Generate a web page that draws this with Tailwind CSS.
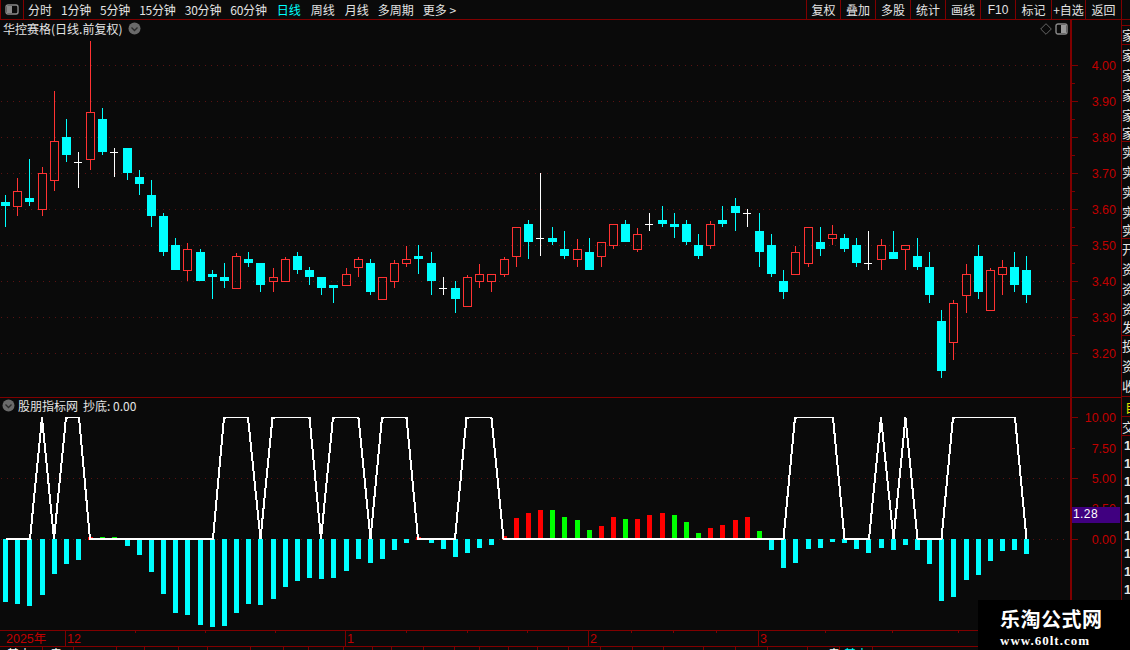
<!DOCTYPE html>
<html lang="zh">
<head>
<meta charset="utf-8">
<title>K线</title>
<script src="https://cdn.jsdelivr.net/npm/@tailwindcss/browser@4"></script>
</head>
<body class="bg-[#0a0a0a]">
<div class="relative w-[1130px] h-[650px] overflow-hidden bg-[#0a0a0a] text-[#e4e4e4] text-[12px] leading-[12px] font-['Noto_Sans_CJK_SC','Liberation_Sans',sans-serif]">

  <!-- top bar -->
  <header class="flex h-[20px] border-b border-[#800000] items-stretch">
    <div class="w-[24px] border-x border-[#800000] flex items-center justify-center">
      <svg width="14" height="11" viewBox="0 0 14 11"><rect x="1" y="1" width="12" height="9" rx="2" fill="none" stroke="#8a8a8a" stroke-width="1.4"/><rect x="2" y="2" width="5" height="7" fill="#8a8a8a"/></svg>
    </div>
    <nav class="flex items-center pl-[4px] gap-[9px]">
      <span>分时</span><span class="tracking-[-0.2px]">1分钟</span><span class="tracking-[-0.2px]">5分钟</span><span class="tracking-[-0.2px]">15分钟</span><span class="tracking-[-0.2px]">30分钟</span><span class="tracking-[-0.2px]">60分钟</span><span class="text-[#00ffff] ml-[1px]">日线</span><span class="ml-[1px]">周线</span><span class="ml-[1px]">月线</span><span>多周期</span><span>更多 &gt;</span>
    </nav>
    <div class="flex-1"></div>
    <div class="flex">
      <span class="w-[34px] border-l border-[#800000] flex items-center justify-center">复权</span>
      <span class="w-[35px] border-l border-[#800000] flex items-center justify-center">叠加</span>
      <span class="w-[35px] border-l border-[#800000] flex items-center justify-center">多股</span>
      <span class="w-[35px] border-l border-[#800000] flex items-center justify-center">统计</span>
      <span class="w-[35px] border-l border-[#800000] flex items-center justify-center">画线</span>
      <span class="w-[35px] border-l border-[#800000] flex items-center justify-center font-['Liberation_Sans',sans-serif]">F10</span>
      <span class="w-[36px] border-l border-[#800000] flex items-center justify-center">标记</span>
      <span class="w-[34px] border-l border-[#800000] flex items-center justify-center whitespace-nowrap">+自选</span>
      <span class="w-[37px] border-x border-[#800000] flex items-center justify-center">返回</span>
      <span class="w-[8px]"></span>
    </div>
  </header>

  <div class="flex h-[630px]">
    <div class="w-[1121px] flex flex-col">
      <!-- price pane -->
      <section class="flex h-[378px] border-b border-[#800000]">
        <div class="relative w-[1070px]">
          <svg id="price" class="block" width="1070" height="377" viewBox="0 20 1070 377" shape-rendering="crispEdges"></svg>
          <div class="absolute left-[3px] top-[2px] flex items-center gap-[6px] whitespace-nowrap">
            <span>华控赛格(日线.前复权)</span>
            <svg width="13" height="13" viewBox="0 0 13 13"><circle cx="6.5" cy="6.5" r="6" fill="#6a6a6a"/><path d="M3.5 5.5 L6.5 8.5 L9.5 5.5" fill="none" stroke="#2a2a2a" stroke-width="1.3"/></svg>
          </div>
          <div class="absolute right-[2px] top-[3px] flex items-center gap-[3px]">
            <svg width="12" height="12" viewBox="0 0 12 12"><path d="M6 .7 L11.3 6 L6 11.3 L.7 6 Z" fill="none" stroke="#666" stroke-width="1"/></svg>
            <svg width="13" height="12" viewBox="0 0 13 12"><rect x="1" y="1" width="11" height="10" rx="2" fill="none" stroke="#8a8a8a" stroke-width="1.4"/><rect x="6" y="2" width="5" height="8" fill="#9a9a9a"/></svg>
          </div>
        </div>
        <div class="w-[51px] border-l-2 border-[#800000]">
          <svg id="priceAxis" class="block" width="49" height="377" viewBox="1072 20 49 377"></svg>
        </div>
      </section>

      <!-- indicator pane -->
      <section class="flex h-[233px] border-b border-[#800000]">
        <div class="relative w-[1070px]">
          <svg id="ind" class="block" width="1070" height="232" viewBox="0 398 1070 232"></svg>
          <div class="absolute left-[2px] top-[1px] flex items-center gap-[3px] whitespace-nowrap">
            <svg width="13" height="13" viewBox="0 0 13 13"><circle cx="6.5" cy="6.5" r="6" fill="#6a6a6a"/><path d="M3.5 5.5 L6.5 8.5 L9.5 5.5" fill="none" stroke="#2a2a2a" stroke-width="1.3"/></svg>
            <span>股朋指标网</span><span class="ml-[2px]">抄底: 0.00</span>
          </div>
        </div>
        <div class="relative w-[51px] border-l-2 border-[#800000]">
          <svg id="indAxis" class="block" width="49" height="232" viewBox="1072 398 49 232"></svg>
          <div class="absolute left-0 top-[109px] w-[48px] h-[16px] bg-[#400080] pl-[1px] text-white font-['Liberation_Sans',sans-serif] leading-[15px] tracking-[0.4px]">1.28</div>
        </div>
      </section>

      <!-- date axis -->
      <section class="h-[16px] border-b border-[#800000]">
        <svg id="time" class="block" width="1121" height="15" viewBox="0 631 1121 15"></svg>
      </section>
      <section class="h-[3px] overflow-hidden">
        <svg id="tabs" class="block" width="1121" height="3" viewBox="0 647 1121 3"></svg>
      </section>
    </div>

    <!-- clipped side list -->
    <aside class="w-[9px] border-l border-[#800000] overflow-hidden flex flex-col whitespace-nowrap text-[13px]">
      <div class="h-[5px] bg-[#0a0a0a]"></div>
      <div class="h-[20px] border-y border-[#800000] leading-[18px]">家</div>
      <div class="h-[97px] border-b border-[#800000]">
        <div class="h-[20px] leading-[20px]">家</div><div class="h-[20px] leading-[20px]">家</div><div class="h-[20px] leading-[20px]">家</div><div class="h-[20px] leading-[20px]">家</div><div class="h-[16px] leading-[16px]">家</div>
      </div>
      <div class="h-[97px] border-b border-[#800000]">
        <div class="h-[20px] leading-[20px]">实</div><div class="h-[20px] leading-[20px]">实</div><div class="h-[20px] leading-[20px]">实</div><div class="h-[20px] leading-[20px]">实</div><div class="h-[16px] leading-[16px]">实</div>
      </div>
      <div class="h-[97px] border-b border-[#800000]">
        <div class="h-[20px] leading-[20px]">开</div><div class="h-[20px] leading-[20px]">资</div><div class="h-[20px] leading-[20px]">资</div><div class="h-[20px] leading-[20px]">资</div><div class="h-[16px] leading-[16px]">发</div>
      </div>
      <div class="h-[61px] border-b border-[#800000]">
        <div class="h-[20px] leading-[20px]">投</div><div class="h-[20px] leading-[20px]">资</div><div class="h-[20px] leading-[20px]">收</div>
      </div>
      <div class="h-[20px] border-b border-[#800000] leading-[20px] text-[#e0e000] pl-[3px]">自</div>
      <div class="h-[19px] border-b border-[#800000] leading-[19px]">交</div>
      <div class="font-['Liberation_Sans',sans-serif] font-bold text-[13px] pl-[2px] pt-[1px]">
        <div class="h-[18px] leading-[18px]">1</div><div class="h-[18px] leading-[18px]">1</div><div class="h-[18px] leading-[18px]">1</div><div class="h-[18px] leading-[18px]">1</div><div class="h-[18px] leading-[18px]">1</div><div class="h-[18px] leading-[18px]">1</div><div class="h-[18px] leading-[18px]">1</div><div class="h-[18px] leading-[18px]">1</div><div class="h-[18px] leading-[18px]">1</div>
      </div>
    </aside>
  </div>

  <!-- watermark -->
  <div class="absolute left-[978px] top-[600px] w-[152px] h-[50px] bg-black text-white flex flex-col items-start pl-[22px]">
    <div class="text-[20px] leading-[24px] mt-[7px] font-bold tracking-[0.5px] whitespace-nowrap">乐淘公式网</div>
    <div class="text-[13px] leading-[15px] mt-[2px] font-bold font-['Liberation_Serif',serif] tracking-[1px] whitespace-nowrap">www.60lt.com</div>
  </div>
</div>

<script>
const C='#00ffff',R='#ff3232',W='#ffffff',G='#00ff00',RB='#ff0000';
const LINE='#800000',TXT='#c00000',DOT='#5a1212',BG='#0a0a0a';
const rect=(x,y,w,h,f)=>`<rect x="${x}" y="${y}" width="${w}" height="${h}" fill="${f}"/>`;
const dots=(y,x2)=>`<line x1="1" x2="${x2}" y1="${y}" y2="${y}" stroke="${DOT}" stroke-width="1" stroke-dasharray="1 5" shape-rendering="crispEdges"/>`;

/* col, type, high, top, bottom, low */
const K=[[5,'c',195,202,206,227],[17,'r',178,191,207,216],[29,'c',159,198,202,206],[42,'r',167,173,210,216],[54,'r',91,141,181,191],[66,'c',119,137,155,162],[78,'w',152,162,162,188],[90,'r',41,112,160,170],[102,'c',108,119,152,155],[114,'w',148,152,152,177],[127,'c',148,148,173,180],[139,'c',170,177,184,195],[151,'c',180,195,216,227],[163,'c',213,216,252,256],[175,'c',238,245,270,270],[187,'r',243,249,271,281],[200,'c',249,252,281,281],[212,'c',270,274,277,299],[224,'c',263,277,281,288],[236,'r',253,256,289,289],[248,'c',252,259,263,267],[260,'c',263,263,285,292],[273,'r',268,277,282,292],[285,'r',257,259,282,282],[297,'c',252,256,270,274],[309,'c',267,270,277,285],[321,'c',277,277,288,295],[333,'c',285,285,288,303],[346,'r',268,274,286,286],[358,'r',257,259,268,277],[370,'c',259,263,292,295],[382,'r',277,277,300,300],[394,'r',260,263,282,288],[406,'r',246,259,264,267],[418,'c',245,256,259,274],[431,'c',252,263,281,295],[443,'w',277,288,288,295],[455,'c',281,288,299,313],[467,'r',275,277,307,307],[479,'r',264,274,282,288],[491,'r',274,274,282,292],[504,'r',257,259,275,277],[516,'r',227,227,257,267],[528,'c',220,224,242,259],[540,'w',173,238,238,256],[552,'c',227,238,242,245],[564,'c',231,249,256,259],[577,'r',239,249,260,267],[589,'c',238,252,270,270],[601,'r',242,242,257,267],[613,'r',224,224,246,249],[625,'c',220,224,242,242],[637,'r',228,234,250,252],[649,'w',213,224,224,231],[662,'c',206,220,224,227],[674,'c',213,224,227,238],[686,'c',220,224,242,245],[698,'c',234,245,256,259],[710,'r',221,224,246,249],[722,'c',206,220,224,227],[735,'c',198,206,213,231],[747,'w',209,213,213,227],[759,'c',213,231,252,267],[771,'c',234,245,274,277],[783,'c',270,281,292,299],[795,'r',246,252,275,275],[808,'r',227,227,264,267],[820,'c',227,242,249,256],[832,'r',225,234,239,245],[844,'c',234,238,249,252],[856,'c',238,245,263,267],[868,'w',231,263,263,270],[881,'r',239,245,260,270],[893,'c',231,252,259,259],[905,'r',245,245,250,270],[917,'c',238,256,267,270],[929,'c',252,267,295,303],[941,'c',310,321,371,378],[953,'r',300,303,343,360],[966,'r',264,274,296,313],[978,'c',245,256,292,299],[990,'r',268,270,311,311],[1002,'r',260,267,275,295],[1014,'c',252,267,285,292],[1026,'c',256,270,295,303]];

let s='';
for(let y=65.5;y<360;y+=36)s+=dots(y,1068);
for(const [x,t,h,a,b,l] of K){
  if(t==='c'){s+=rect(x,h,1,l-h,C)+rect(x-4,a,9,b-a,C);}
  else if(t==='w'){s+=rect(x,h,1,l-h,W)+rect(x-4,a,8,1,W);}
  else{s+=rect(x,h,1,a-h,R)+rect(x,b,1,l-b,R)+rect(x-4,a,9,1,R)+rect(x-4,b-1,9,1,R)+rect(x-4,a,1,b-a,R)+rect(x+4,a,1,b-a,R);}
}
document.getElementById('price').innerHTML=s;

let pa='';
for(let i=0;i<9;i++){const y=65.5+36*i;
  pa+=`<rect x="1072" y="${y-.5}" width="6" height="1" fill="${LINE}"/>`;
  if(i<8)pa+=`<rect x="1072" y="${y+17.5}" width="3" height="1" fill="${LINE}"/>`;
  pa+=`<text x="1116" y="${y+4}" text-anchor="end" fill="${TXT}" font-family="Liberation Sans" font-size="12.5">${(4-i*0.1).toFixed(2)}</text>`;
}
document.getElementById('priceAxis').innerHTML=pa;

/* indicator bars: col, colour, end y */
const B=[[5,602],[17,604],[29,606],[42,595],[54,574],[66,564],[78,560],[127,546],[139,555],[151,572],[163,594],[175,613],[187,615],[200,625],[212,627],[224,626],[236,613],[248,604],[260,605],[273,599],[285,587],[297,581],[309,578],[321,579],[333,578],[346,571],[358,559],[370,563],[382,559],[394,550],[406,543],[431,543],[443,549],[455,557],[467,553],[479,548],[491,545],[771,550],[783,568],[795,563],[808,549],[820,548],[832,542],[844,543],[856,549],[868,553],[881,548],[893,550],[905,545],[917,550],[929,564],[941,601],[953,597],[966,580],[978,575],[990,561],[1002,551],[1014,550],[1026,554]];
const U=[[90,537,RB],[102,537,G],[114,537,G],[418,537,RB],[504,536,RB],[516,518,RB],[528,513,RB],[540,510,RB],[552,510,G],[564,517,G],[577,520,G],[589,530,G],[601,526,RB],[613,517,RB],[625,519,G],[637,519,RB],[649,515,RB],[662,513,RB],[674,515,G],[686,522,G],[698,533,G],[710,528,RB],[722,525,RB],[735,520,RB],[747,517,RB],[759,531,G]];
let n=dots(478.5,1068)+dots(539.5,1068);
for(const [x,e] of B)n+=rect(x-2,539,5,e-539,C);
for(const [x,t,c] of U)n+=rect(x-2,t,5,540-t,c);
const P='6,539 30,539 42,417.5 54,539 66,417.5 79,417.5 90,539 213,539 224,417.5 248,417.5 260.5,539 272.5,417.5 309.5,417.5 321,539 333,417.5 358.5,417.5 370.5,539 382,417.5 406.5,417.5 418,539 455,539 466.5,417.5 491.5,417.5 503.5,539 783.5,539 795,417.5 833,417.5 844.5,539 869,539 881,417.5 893.5,539 905.5,417.5 917.5,539 941.5,539 953,417.5 1015,417.5 1026.5,539';
n+=`<polyline points="${P}" fill="none" stroke="#fff" stroke-width="2" shape-rendering="crispEdges" stroke-linejoin="miter"/>`;
/* the plateaus at 10.00 are one pixel thick */
[[68,78],[226,247],[275,308],[335,357],[384,405],[469,490],[797,832],[955,1014]].forEach(([a,b])=>n+=`<rect x="${a}" y="418" width="${b-a}" height="1" fill="${BG}" shape-rendering="crispEdges"/>`);
document.getElementById('ind').innerHTML=n;

let ia='';
[[417.5,'10.00',6],[448.5,'7.50',3],[478.5,'5.00',6],[509,'2.50',3],[539.5,'0.00',6]].forEach(([y,t,w])=>{
  ia+=`<rect x="1072" y="${y-.5}" width="${w}" height="1" fill="${LINE}"/>`;
  ia+=`<text x="1116" y="${y+4}" text-anchor="end" fill="${TXT}" font-family="Liberation Sans" font-size="12.5">${t}</text>`;
});
document.getElementById('indAxis').innerHTML=ia;

let tm='';
[135,205,275,406,467,527,631,673,716,825,892,958].forEach(x=>tm+=rect(x,631,1,2,LINE));
[65,345,588,758].forEach(x=>tm+=rect(x,631,1,15,LINE));
[[6,'2025年'],[67,'12'],[347,'1'],[590,'2'],[760,'3']].forEach(([x,t])=>tm+=`<text x="${x}" y="643" fill="${TXT}" font-family="Liberation Sans,Noto Sans CJK SC" font-size="12.5">${t}</text>`);
document.getElementById('time').innerHTML=tm;

let tb='';
[42,73,116,144,178,207,250,283,308,343,372,391,423,454,479,508,537,568,600,632,663,703,735,767,807,839,872].forEach(x=>tb+=rect(x,647,1,3,LINE));
[[7,'基本',W],[50,'走',W],[828,'走',W],[844,'基本',C]].forEach(([x,t,c])=>tb+=`<text x="${x}" y="659" fill="${c}" font-family="Noto Sans CJK SC" font-size="12">${t}</text>`);
document.getElementById('tabs').innerHTML=tb;
</script>
</body>
</html>
